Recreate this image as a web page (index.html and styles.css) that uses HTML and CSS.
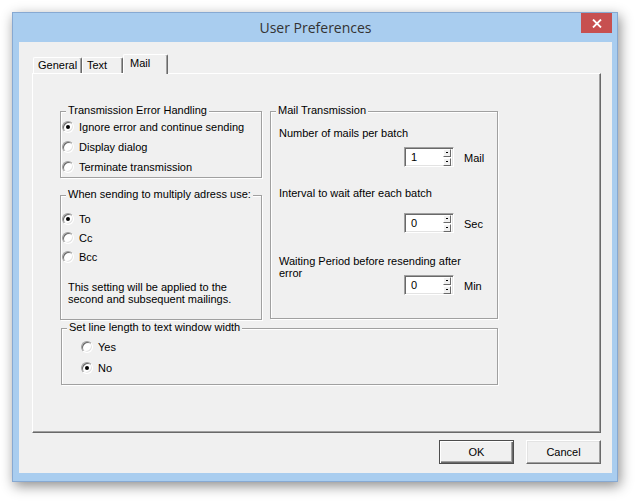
FILE: index.html
```html
<!DOCTYPE html>
<html>
<head>
<meta charset="utf-8">
<title>User Preferences</title>
<link rel="stylesheet" href="styles.css">
</head>
<body>
<div class="window">
  <div class="titlebar">
    <span></span>
    <span class="title">User Preferences</span>
    <button class="close" aria-label="Close">
      <svg width="10" height="9" viewBox="0 0 10 9"><path d="M1 0.5 L9 8.5 M9 0.5 L1 8.5" stroke="#fff" stroke-width="1.8" fill="none"/></svg>
    </button>
  </div>
  <div class="client">
    <div class="tabs">
      <div class="tab">General</div>
      <div class="tab">Text</div>
      <div class="tab active">Mail</div>
    </div>
    <div class="panel">
      <div class="grid">
        <div class="group g1">
          <div class="legend">Transmission Error Handling</div>
          <div class="radio-row r20"><span class="radio checked"></span><span>Ignore error and continue sending</span></div>
          <div class="radio-row r20"><span class="radio"></span><span>Display dialog</span></div>
          <div class="radio-row r20"><span class="radio"></span><span>Terminate transmission</span></div>
        </div>
        <div class="group g3">
          <div class="legend">Mail Transmission</div>
          <div class="label l1">Number of mails per batch</div>
          <div class="spinrow s1">
            <div class="spin"><span class="spin-val">1</span><span class="spin-btns"><span class="sb"></span><span class="sb"></span></span></div>
            <span class="unit">Mail</span>
          </div>
          <div class="label l2">Interval to wait after each batch</div>
          <div class="spinrow s2">
            <div class="spin"><span class="spin-val">0</span><span class="spin-btns"><span class="sb"></span><span class="sb"></span></span></div>
            <span class="unit">Sec</span>
          </div>
          <div class="label l3">Waiting Period before resending after<br>error</div>
          <div class="spinrow s3">
            <div class="spin"><span class="spin-val">0</span><span class="spin-btns"><span class="sb"></span><span class="sb"></span></span></div>
            <span class="unit">Min</span>
          </div>
        </div>
        <div class="group g2">
          <div class="legend">When sending to multiply adress use:</div>
          <div class="rows2">
            <div class="radio-row r19"><span class="radio checked"></span><span>To</span></div>
            <div class="radio-row r19"><span class="radio"></span><span>Cc</span></div>
            <div class="radio-row r19"><span class="radio"></span><span>Bcc</span></div>
          </div>
          <p class="note">This setting will be applied to the<br>second and subsequent mailings.</p>
        </div>
        <div class="group g4">
          <div class="legend">Set line length to text window width</div>
          <div class="rows4">
            <div class="radio-row r21"><span class="radio"></span><span>Yes</span></div>
            <div class="radio-row r21"><span class="radio checked"></span><span>No</span></div>
          </div>
        </div>
      </div>
    </div>
    <div class="buttons">
      <button class="btn default">OK</button>
      <button class="btn">Cancel</button>
    </div>
  </div>
</div>
</body>
</html>
```

FILE: styles.css
```css
html, body {
  margin: 0;
  padding: 0;
  background: #ffffff;
}
body {
  width: 639px;
  height: 502px;
  overflow: hidden;
  font-family: "Liberation Sans", Arial, sans-serif;
  font-size: 11px;
  color: #000;
}
.window {
  box-sizing: border-box;
  width: 606px;
  height: 470px;
  margin: 12px 0 0 12px;
  border: 1px solid #87a9d2;
  background: #a9cdef;
  padding: 0 5px 8px 6px;
  box-shadow: 2px 4px 12px rgba(0, 0, 0, 0.45);
  display: flex;
  flex-direction: column;
}
.titlebar {
  height: 29px;
  display: grid;
  grid-template-columns: 1fr auto 1fr;
  align-items: center;
}
.title {
  font-family: "Open Sans", "Noto Sans", sans-serif;
  font-size: 14px;
  color: #333;
  line-height: 18px;
}
.close {
  justify-self: end;
  align-self: start;
  width: 31px;
  height: 20px;
  border: 0;
  padding: 0;
  margin: 0;
  background: #c75050;
  display: flex;
  align-items: center;
  justify-content: center;
}
.client {
  flex: 1;
  background: #f0f0f0;
  padding: 12px 11px 0 13px;
  display: flex;
  flex-direction: column;
}
.tabs {
  display: flex;
  align-items: flex-end;
  height: 19px;
  padding-left: 1px;
}
.tab {
  box-sizing: border-box;
  height: 16px;
  line-height: 14px;
  padding: 0 4px;
  border-top: 1px solid #fff;
  border-left: 1px solid #fff;
  border-right: 1px solid #696969;
  box-shadow: inset -1px 0 0 #a0a0a0;
  border-radius: 2px 2px 0 0;
  background: #f0f0f0;
}
.tab:nth-child(1) { width: 49px; }
.tab:nth-child(2) { width: 41px; }
.tab.active {
  width: 45px;
  height: 20px;
  margin-bottom: -1px;
  padding: 0 6px;
  line-height: 17px;
  position: relative;
  z-index: 1;
}
.panel {
  box-sizing: border-box;
  height: 360px;
  border-top: 1px solid #fff;
  border-left: 1px solid #fff;
  border-right: 1px solid #696969;
  border-bottom: 1px solid #696969;
  box-shadow: inset -1px -1px 0 #a0a0a0;
  padding: 37px 0 0 27px;
}
.grid {
  display: grid;
  grid-template-columns: 202px 228px;
  column-gap: 8px;
  align-items: start;
}
.group {
  box-sizing: border-box;
  border: 1px solid #a0a0a0;
  box-shadow: 1px 1px 0 #fff, inset 1px 1px 0 #fff;
}
.legend {
  width: fit-content;
  margin: -8px 0 0 5px;
  padding: 0 2px;
  line-height: 13px;
  background: #f0f0f0;
}
.g1 {
  height: 67px;
  grid-column: 1;
  grid-row: 1;
}
.g2 {
  height: 125px;
  grid-column: 1;
  grid-row: 2;
  margin-top: 17px;
}
.g3 {
  height: 208px;
  grid-column: 2;
  grid-row: 1 / span 2;
  padding-left: 8px;
}
.g3 .legend {
  margin-left: -3px;
}
.g4 {
  height: 57px;
  grid-column: 1 / span 2;
  grid-row: 3;
  margin: 8px 0 0 1px;
}
.radio-row {
  display: flex;
  align-items: center;
  gap: 5px;
  padding-left: 1px;
}
.r20 { height: 20px; }
.r19 { height: 19px; }
.r21 { height: 21px; }
.rows2 { margin-top: 8px; }
.rows4 { margin-top: 2px; }
.g4 .radio-row { padding-left: 19px; }
.radio {
  box-sizing: border-box;
  width: 12px;
  height: 12px;
  border-radius: 50%;
  border: 1px solid;
  border-color: #a0a0a0 #fff #fff #a0a0a0;
  box-shadow: inset 1px 1px 0 #696969, inset -1px -1px 0 #e3e3e3;
  background: #fff;
  display: flex;
  align-items: center;
  justify-content: center;
  flex: none;
}
.radio.checked::after {
  content: "";
  width: 4px;
  height: 4px;
  border-radius: 50%;
  background: #000;
}
.note {
  margin: 15px 0 0 7px;
  line-height: 12px;
}
.label {
  line-height: 13px;
}
.l1 { margin-top: 10px; }
.l2 { margin-top: 20px; }
.l3 { margin-top: 22px; line-height: 12px; }
.spinrow {
  display: flex;
  align-items: center;
  padding-left: 125px;
  gap: 10px;
}
.s1 { margin-top: 7px; }
.s2 { margin-top: 13px; }
.s3 { margin-top: -4px; }
.unit {
  padding-top: 2px;
}
.spin {
  box-sizing: border-box;
  width: 50px;
  height: 20px;
  background: #fff;
  border: 1px solid;
  border-color: #a0a0a0 #fff #fff #a0a0a0;
  box-shadow: inset 1px 1px 0 #696969, inset -1px -1px 0 #e3e3e3;
  display: flex;
  align-items: center;
  justify-content: space-between;
  padding: 1px 1px 1px 6px;
}
.spin-val {
  line-height: 13px;
}
.spin-btns {
  display: flex;
  flex-direction: column;
  gap: 1px;
  margin-right: 1px;
}
.sb {
  box-sizing: border-box;
  width: 8px;
  height: 8px;
  background: #f0f0f0;
  border: 1px solid;
  border-color: #fff #696969 #696969 #fff;
  display: flex;
  align-items: center;
  justify-content: center;
}
.sb::after {
  content: "";
  width: 2px;
  height: 1px;
  background: #000;
}
.buttons {
  display: flex;
  justify-content: flex-end;
  gap: 12px;
  margin-top: 7px;
}
.btn {
  box-sizing: border-box;
  width: 75px;
  height: 24px;
  margin: 0;
  padding: 0;
  font-family: "Liberation Sans", Arial, sans-serif;
  font-size: 11px;
  color: #000;
  background: #f0f0f0;
  border: 1px solid;
  border-color: #fff #696969 #696969 #fff;
  box-shadow: inset -1px -1px 0 #a0a0a0, inset 1px 1px 0 #e3e3e3;
}
.btn.default {
  border: 1px solid #4d4d4d;
  box-shadow: inset 1px 1px 0 #fff, inset -1px -1px 0 #696969, inset -2px -2px 0 #a0a0a0;
}
```
